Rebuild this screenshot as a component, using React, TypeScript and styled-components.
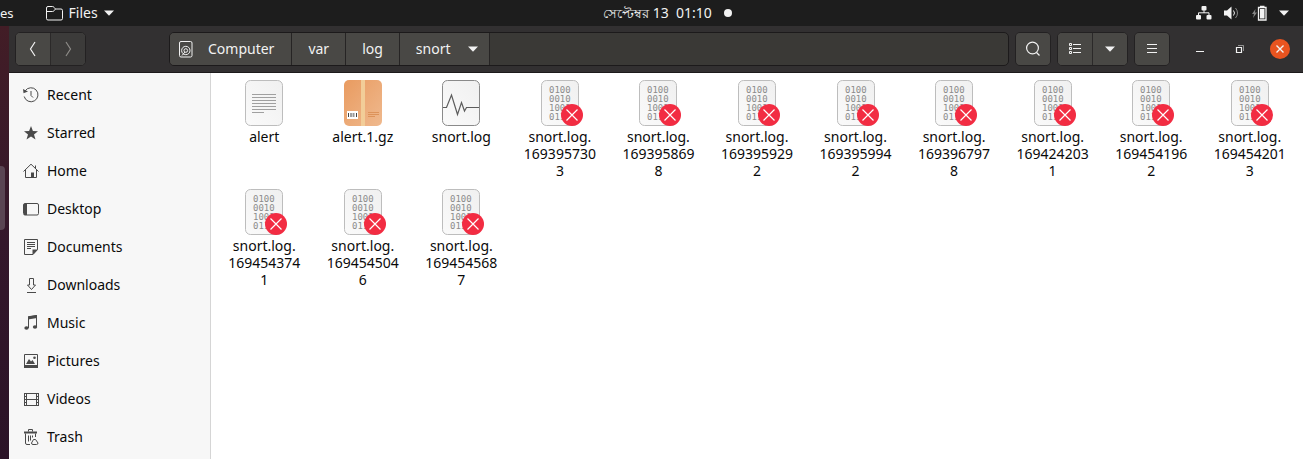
import React from "react";
import styled, { createGlobalStyle, css } from "styled-components";

const Global = createGlobalStyle`
  * { box-sizing: border-box; }
  html, body, #root { height: 100%; }
  body {
    margin: 0;
    overflow: hidden;
    font-family: "Noto Sans", "Open Sans", sans-serif;
    font-size: 14px;
    background: #2c1326;
  }
  button, input { font: inherit; color: inherit; }
  svg { display: block; flex: none; }
`;

const Screen = styled.div`
  display: flex;
  flex-direction: column;
  height: 100%;
`;

const TopBar = styled.header`
  display: grid;
  grid-template-columns: 1fr auto 1fr;
  align-items: center;
  flex: none;
  height: 26px;
  padding-right: 14px;
  background: #1d1d1d;
  color: #f2f2f2;
  line-height: 20px;
`;

const TopGroup = styled.div<{ $end?: boolean }>`
  display: flex;
  align-items: center;
  justify-content: ${(p) => (p.$end ? "flex-end" : "flex-start")};
  gap: ${(p) => (p.$end ? "12px" : "32px")};
`;

const PanelButton = styled.button`
  display: flex;
  align-items: center;
  gap: 6px;
  padding: 0;
  border: 0;
  background: none;
  white-space: pre;
`;

const SmallText = styled.span`
  font-size: 13px;
`;

const Clock = styled(PanelButton)`
  gap: 12px;
  padding-left: 46px;
`;

const Dot = styled.span`
  width: 8px;
  height: 8px;
  border-radius: 50%;
  background: #f2f2f2;
`;

const Desktop = styled.div`
  display: flex;
  flex: 1;
  min-height: 0;
`;

const Dock = styled.div`
  display: flex;
  flex-direction: column;
  flex: none;
  width: 9px;
  padding-top: 140px;
  background: linear-gradient(#421d26, #34172b 50%, #2b1327);
`;

const DockHighlight = styled.span`
  width: 5px;
  height: 64px;
  border-radius: 0 4px 4px 0;
  background: #5a4553;
`;

const Window = styled.main`
  display: flex;
  flex-direction: column;
  flex: 1;
  min-width: 0;
  background: #fff;
`;

const HeaderBar = styled.div`
  display: flex;
  align-items: center;
  flex: none;
  height: 47px;
  padding: 0 13px 0 6px;
  border-bottom: 1px solid #1c1a1b;
  background: #323031;
  color: #f2f2f2;
`;

const ButtonGroup = styled.div`
  display: flex;
  flex: none;
  height: 34px;
  border: 1px solid #232122;
  border-radius: 5px;
  overflow: hidden;
  background: #494845;
`;

const ToolButton = styled.button<{ $off?: boolean }>`
  display: flex;
  align-items: center;
  justify-content: center;
  width: 34px;
  padding: 0;
  border: 0;
  background: ${(p) => (p.$off ? "#3c3b3a" : "#494845")};
  color: ${(p) => (p.$off ? "#8d8b88" : "#f2f2f2")};
  & + & { border-left: 1px solid #2b2929; width: 35px; }
`;

const PathBar = styled.nav`
  display: flex;
  flex: 1;
  min-width: 0;
  height: 34px;
  margin: 0 6px 0 83px;
  border: 1px solid #1c1a1b;
  border-radius: 5px;
  overflow: hidden;
  background: #3a3936;
`;

const Crumb = styled.button<{ $icon?: boolean; $menu?: boolean }>`
  display: flex;
  align-items: center;
  gap: ${(p) => (p.$icon ? "15px" : "17px")};
  padding: ${(p) => (p.$icon ? "0 17px 0 9px" : p.$menu ? "0 11px 0 16px" : "0 16px")};
  border: 0;
  border-right: 1px solid #262424;
  background: #494845;
  line-height: 20px;
`;

const Tools = styled.div`
  display: flex;
  flex: none;
  gap: 6px;
`;

const WindowControls = styled.div`
  display: flex;
  align-items: center;
  flex: none;
  gap: 20px;
  margin-left: 20px;
`;

const WindowButton = styled.button<{ $close?: boolean }>`
  display: flex;
  align-items: center;
  justify-content: center;
  width: 20px;
  height: 20px;
  padding: 0;
  border: 0;
  border-radius: 50%;
  background: none;
  ${(p) => p.$close && css`background: #e95420;`}
`;

const Body = styled.div`
  display: flex;
  flex: 1;
  min-height: 0;
`;

const Sidebar = styled.nav`
  flex: none;
  width: 202px;
  padding-top: 3px;
  border-right: 1px solid #d5d5d5;
  background: #f7f7f7;
  overflow: hidden;
`;

const Place = styled.a`
  display: flex;
  align-items: center;
  gap: 8px;
  height: 38px;
  padding-left: 14px;
  color: #0a0a0a;
  line-height: 20px;
  text-decoration: none;
  svg { color: #4a4a4a; }
`;

const Files = styled.ul`
  display: grid;
  grid-template-columns: repeat(auto-fill, minmax(96px, 1fr));
  align-content: start;
  row-gap: 10px;
  flex: 1;
  min-width: 0;
  margin: 0;
  padding: 7px 4px 0;
  list-style: none;
`;

const File = styled.li`
  display: flex;
  flex-direction: column;
  align-items: center;
  gap: 2px;
`;

const FileName = styled.span`
  max-width: 78px;
  color: #0a0a0a;
  line-height: 17px;
  text-align: center;
  overflow-wrap: anywhere;
`;

const Caret = () => (
  <svg width="10" height="6" viewBox="0 0 10 6"><path d="M0 0.500h10L5 5.700z" fill="currentColor" /></svg>
);

const FolderIcon = () => (
  <svg width="17" height="15" viewBox="0 0 17 15" fill="none" stroke="currentColor">
    <path d="M.5 3V12.500q0 1.500 1.500 1.500H15q1.500 0 1.500-1.500V4.500Q16.500 3 15 3H9.500L8 1.300Q7.400.500 6.500.500H2Q.500.500.500 2V5.500H6.500Q7.500 5.500 8 4.800L9.500 3" />
  </svg>
);

const DiskIcon = () => (
  <svg width="14" height="17" viewBox="0 0 14 17" fill="none" stroke="currentColor">
    <rect x=".5" y=".5" width="12.500" height="15.500" rx="1.500" />
    <circle cx="6.800" cy="9.500" r="4.200" /><circle cx="6.800" cy="9.500" r="1.800" />
    <path d="M3 14.500L6 11" />
  </svg>
);

const NetworkIcon = () => (
  <svg width="16" height="14" viewBox="0 0 16 14" fill="currentColor">
    <rect x="5.500" y="0" width="5" height="4.500" rx="1" /><rect x="0" y="9" width="5" height="4.500" rx="1" />
    <rect x="10.500" y="9" width="5" height="4.500" rx="1" />
    <path d="M8 4v3M2.500 9.500V6.800h10.500v2.700" fill="none" stroke="currentColor" />
  </svg>
);

const VolumeIcon = () => (
  <svg width="16" height="14" viewBox="0 0 16 14" fill="none" stroke="currentColor">
    <path d="M0 4.500h3L7.500.500v13L3 9.500H0z" fill="currentColor" stroke="none" />
    <path d="M9.500 4.500q2 2.500 0 5" /><path d="M11.500 2q4 5 0 10" opacity=".5" />
  </svg>
);

const BatteryIcon = () => (
  <svg width="15" height="16" viewBox="0 0 15 16" fill="none" stroke="currentColor">
    <path d="M3.500 4L0 9h2L1 13l4-5.500H3z" fill="#858585" stroke="none" />
    <path d="M6.500 2.500h7.500v12.500H6.500zM8 1.500h4.500" strokeWidth="1.300" /><path d="M8 4h4.500v9.500H8z" fill="currentColor" stroke="none" />
  </svg>
);

const ToolIcon = ({ name }: { name: string }) => (
  <svg width="16" height="16" viewBox="0 0 16 16" fill="none" stroke="currentColor">
    {name === "back" && <path d="M10 1L5.500 8l4.500 7" strokeWidth="1.200" />}
    {name === "forward" && <path d="M6 1l4.500 7L6 15" strokeWidth="1.200" />}
    {name === "search" && <><circle cx="7.500" cy="7" r="5.900" strokeWidth="1.200" /><path d="M11.500 11.500l3 3" strokeWidth="1.300" /></>}
    {name === "list" && <path d="M2.500 2.500h2v2h-2zM2.500 6.500h2v2h-2zM2.500 10.500h2v2h-2zM6 3.500h8M6 7.500h8M6 11.500h8" />}
    {name === "menu" && <path d="M3 3.500h10M3 7.500h10M3 11.500h10" />}
    {name === "min" && <path d="M4 10.500h8" />}
    {name === "restore" && <><path d="M4.500 6.500h5v5h-5z" strokeWidth="1.200" /><path d="M6 4.500h5.500V10" opacity=".5" /></>}
    {name === "close" && <path d="M4.500 4.500l7 7M11.500 4.500l-7 7" strokeWidth="1.400" />}
  </svg>
);

const placeIcons: Record<string, React.ReactNode> = {
  Recent: <><path d="M2.200 3.800A7 7 0 1 1 1.200 9.500" /><path d="M0 2l.5 4.200L5 4.500z" fill="currentColor" stroke="none" /><path d="M8 4v4.500l2 2" /></>,
  Starred: <path d="M8 1l1.900 4.900 5.100.3-4 3.300 1.500 5L8 11.600 3.500 14.500l1.500-5-4-3.300 5.100-.3z" fill="currentColor" stroke="none" />,
  Home: <><path d="M.5 8.500L8 1.200l7.500 7.300M2.500 7v7.500h11V7M12.500 2.500v3" /><path d="M8 9.500h3V15H8z" fill="currentColor" stroke="none" /></>,
  Desktop: <><rect x=".5" y="2.500" width="15" height="11.500" rx="1.500" /><path d="M1 3h3v11H1z" fill="currentColor" stroke="none" /></>,
  Documents: <><path d="M1.500.5h13v10l-4.500 5H1.500z" /><path d="M4 3.500h8M4 5.500h8M4 7.500h8M4 9.500h4" /><path d="M9.500 16v-5.500h5.500z" fill="currentColor" stroke="none" /></>,
  Downloads: <path d="M6.500 1.500h4V8h2L8.500 12.500 4.500 8h2zM4 15.500h9" />,
  Music: <><path d="M5.500 13V2l8-1.500V12" /><path d="M5 1.300L14 0v3L5 4.500z" fill="currentColor" stroke="none" /><ellipse cx="3.500" cy="13" rx="2.200" ry="1.800" fill="currentColor" stroke="none" /><ellipse cx="12" cy="12" rx="2.200" ry="1.800" fill="currentColor" stroke="none" /></>,
  Pictures: <><path d="M1.500 1.500h13v13h-13z" /><path d="M1 12h14v3H1zM3 11l3-5 2 2.500L9.500 7l2.500 4z" fill="currentColor" stroke="none" /><circle cx="11.500" cy="4.800" r="1.300" fill="currentColor" stroke="none" /></>,
  Videos: <><path d="M1.500 2v13M3.500 2v13M13.500 2v13M15.500 2v13M3.500 2.500h10M3.500 8.500h10M3.500 14.500h10" /><path d="M2.500 2v13M14.500 2v13" strokeDasharray="1 2" /></>,
  Trash: <><path d="M1 3.500h13" strokeWidth="2" /><path d="M5.500 2.500v-2h4v2M2.500 4.500V14q0 1.500 1.500 1.500h3M12.500 4.500V8M5.500 6.500v6M7.500 6.500v5M9.500 6.500v2" /><path d="M8.500 14l2-3.500h2l2.500 3.500q0 1.500-1.500 1.500h-3.500q-1.500 0-1.500-1.500z" /></>,
};

const PlaceIcon = ({ name }: { name: string }) => (
  <svg width="16" height="16" viewBox="0 0 16 16" fill="none" stroke="currentColor">{placeIcons[name]}</svg>
);

type Kind = "text" | "archive" | "log" | "binary";

const FileIcon = ({ kind }: { kind: Kind }) => (
  <svg width="48" height="46" viewBox="0 0 48 46" fill="none">
    <defs>
      <linearGradient id="paper" x1="0" y1="1" x2="1" y2="0"><stop offset="0" stopColor="#fafafa" /><stop offset="1" stopColor="#f0f0f0" /></linearGradient>
      <linearGradient id="box" x1="0" y1="0" x2="1" y2="1"><stop offset="0" stopColor="#e99b60" /><stop offset="1" stopColor="#efb98e" /></linearGradient>
    </defs>
    {kind === "archive" ? (
      <>
        <rect x="5" y="0" width="38" height="46" rx="5" fill="url(#box)" />
        <path d="M22 0h4v46h-4z" fill="#f2cd98" />
        <path d="M8 31h11v8H8z" fill="#fff" />
        <path d="M9.500 33v4M12 33v4M17.500 33v4" stroke="#444" /><path d="M14.500 33v4" stroke="#999" strokeWidth="2" />
        <path d="M29 32.500h11M29 34.500h11M29 36.500h7" stroke="#dd935a" />
      </>
    ) : (
      <rect x="5.500" y=".5" width="37" height="45" rx="5" fill="url(#paper)" stroke={kind === "log" ? "#8a8a8a" : "#bdbdbd"} />
    )}
    {kind === "text" && <path d="M12 14.500h24M12 17.500h24M12 20.500h24M12 23.500h24M12 26.500h24M12 29.500h24M12 32.500h12" stroke="#a0a0a0" />}
    {kind === "log" && <path d="M6 27.500h3.500L14.500 15l6 19.500 4-12 3 8.500 2-3.500h12.500" stroke="#5c5c5c" strokeWidth="1.200" />}
    {kind === "binary" && (
      <>
        <g fill="#8c8c8c" fontFamily="DejaVu Sans Mono, monospace" fontSize="9">
          <text x="13" y="13">0100</text><text x="13" y="22">0010</text><text x="13" y="31">1001</text><text x="13" y="40">0110</text>
        </g>
        <circle cx="36" cy="35" r="11" fill="#f22c42" />
        <path d="M30.500 29.500l11 11M41.500 29.500l-11 11" stroke="#fff" strokeWidth="1.200" />
      </>
    )}
  </svg>
);

const files: { kind: Kind; name: string; id?: string }[] = [
  { kind: "text", name: "alert" },
  { kind: "archive", name: "alert.1.gz" },
  { kind: "log", name: "snort.log" },
  ...["1693957303", "1693958698", "1693959292", "1693959942", "1693967978", "1694242031", "1694541962",
    "1694542013", "1694543741", "1694545046", "1694545687"].map((id) => ({ kind: "binary" as Kind, name: "snort.log.", id })),
];

export default function App() {
  return (
    <Screen>
      <Global />
      <TopBar>
        <TopGroup>
          <SmallText>es</SmallText>
          <PanelButton><FolderIcon />Files<Caret /></PanelButton>
        </TopGroup>
        <Clock><span><SmallText>সেপ্টেম্বর</SmallText> 13{"  "}01:10</span><Dot /></Clock>
        <TopGroup $end><NetworkIcon /><VolumeIcon /><BatteryIcon /><Caret /></TopGroup>
      </TopBar>
      <Desktop>
        <Dock><DockHighlight /></Dock>
        <Window>
          <HeaderBar>
            <ButtonGroup>
              <ToolButton aria-label="Back"><ToolIcon name="back" /></ToolButton>
              <ToolButton aria-label="Forward" $off><ToolIcon name="forward" /></ToolButton>
            </ButtonGroup>
            <PathBar>
              <Crumb $icon><DiskIcon />Computer</Crumb>
              <Crumb>var</Crumb>
              <Crumb>log</Crumb>
              <Crumb $menu>snort<Caret /></Crumb>
            </PathBar>
            <Tools>
              <ButtonGroup><ToolButton aria-label="Search"><ToolIcon name="search" /></ToolButton></ButtonGroup>
              <ButtonGroup>
                <ToolButton aria-label="List view"><ToolIcon name="list" /></ToolButton>
                <ToolButton aria-label="View options"><Caret /></ToolButton>
              </ButtonGroup>
              <ButtonGroup><ToolButton aria-label="Menu"><ToolIcon name="menu" /></ToolButton></ButtonGroup>
            </Tools>
            <WindowControls>
              <WindowButton aria-label="Minimize"><ToolIcon name="min" /></WindowButton>
              <WindowButton aria-label="Restore"><ToolIcon name="restore" /></WindowButton>
              <WindowButton aria-label="Close" $close><ToolIcon name="close" /></WindowButton>
            </WindowControls>
          </HeaderBar>
          <Body>
            <Sidebar>
              {Object.keys(placeIcons).map((name) => (
                <Place key={name} href="#"><PlaceIcon name={name} />{name}</Place>
              ))}
            </Sidebar>
            <Files>
              {files.map((f) => (
                <File key={f.name + (f.id ?? "")}>
                  <FileIcon kind={f.kind} />
                  <FileName>{f.name}{f.id && <><wbr />{f.id}</>}</FileName>
                </File>
              ))}
            </Files>
          </Body>
        </Window>
      </Desktop>
    </Screen>
  );
}
